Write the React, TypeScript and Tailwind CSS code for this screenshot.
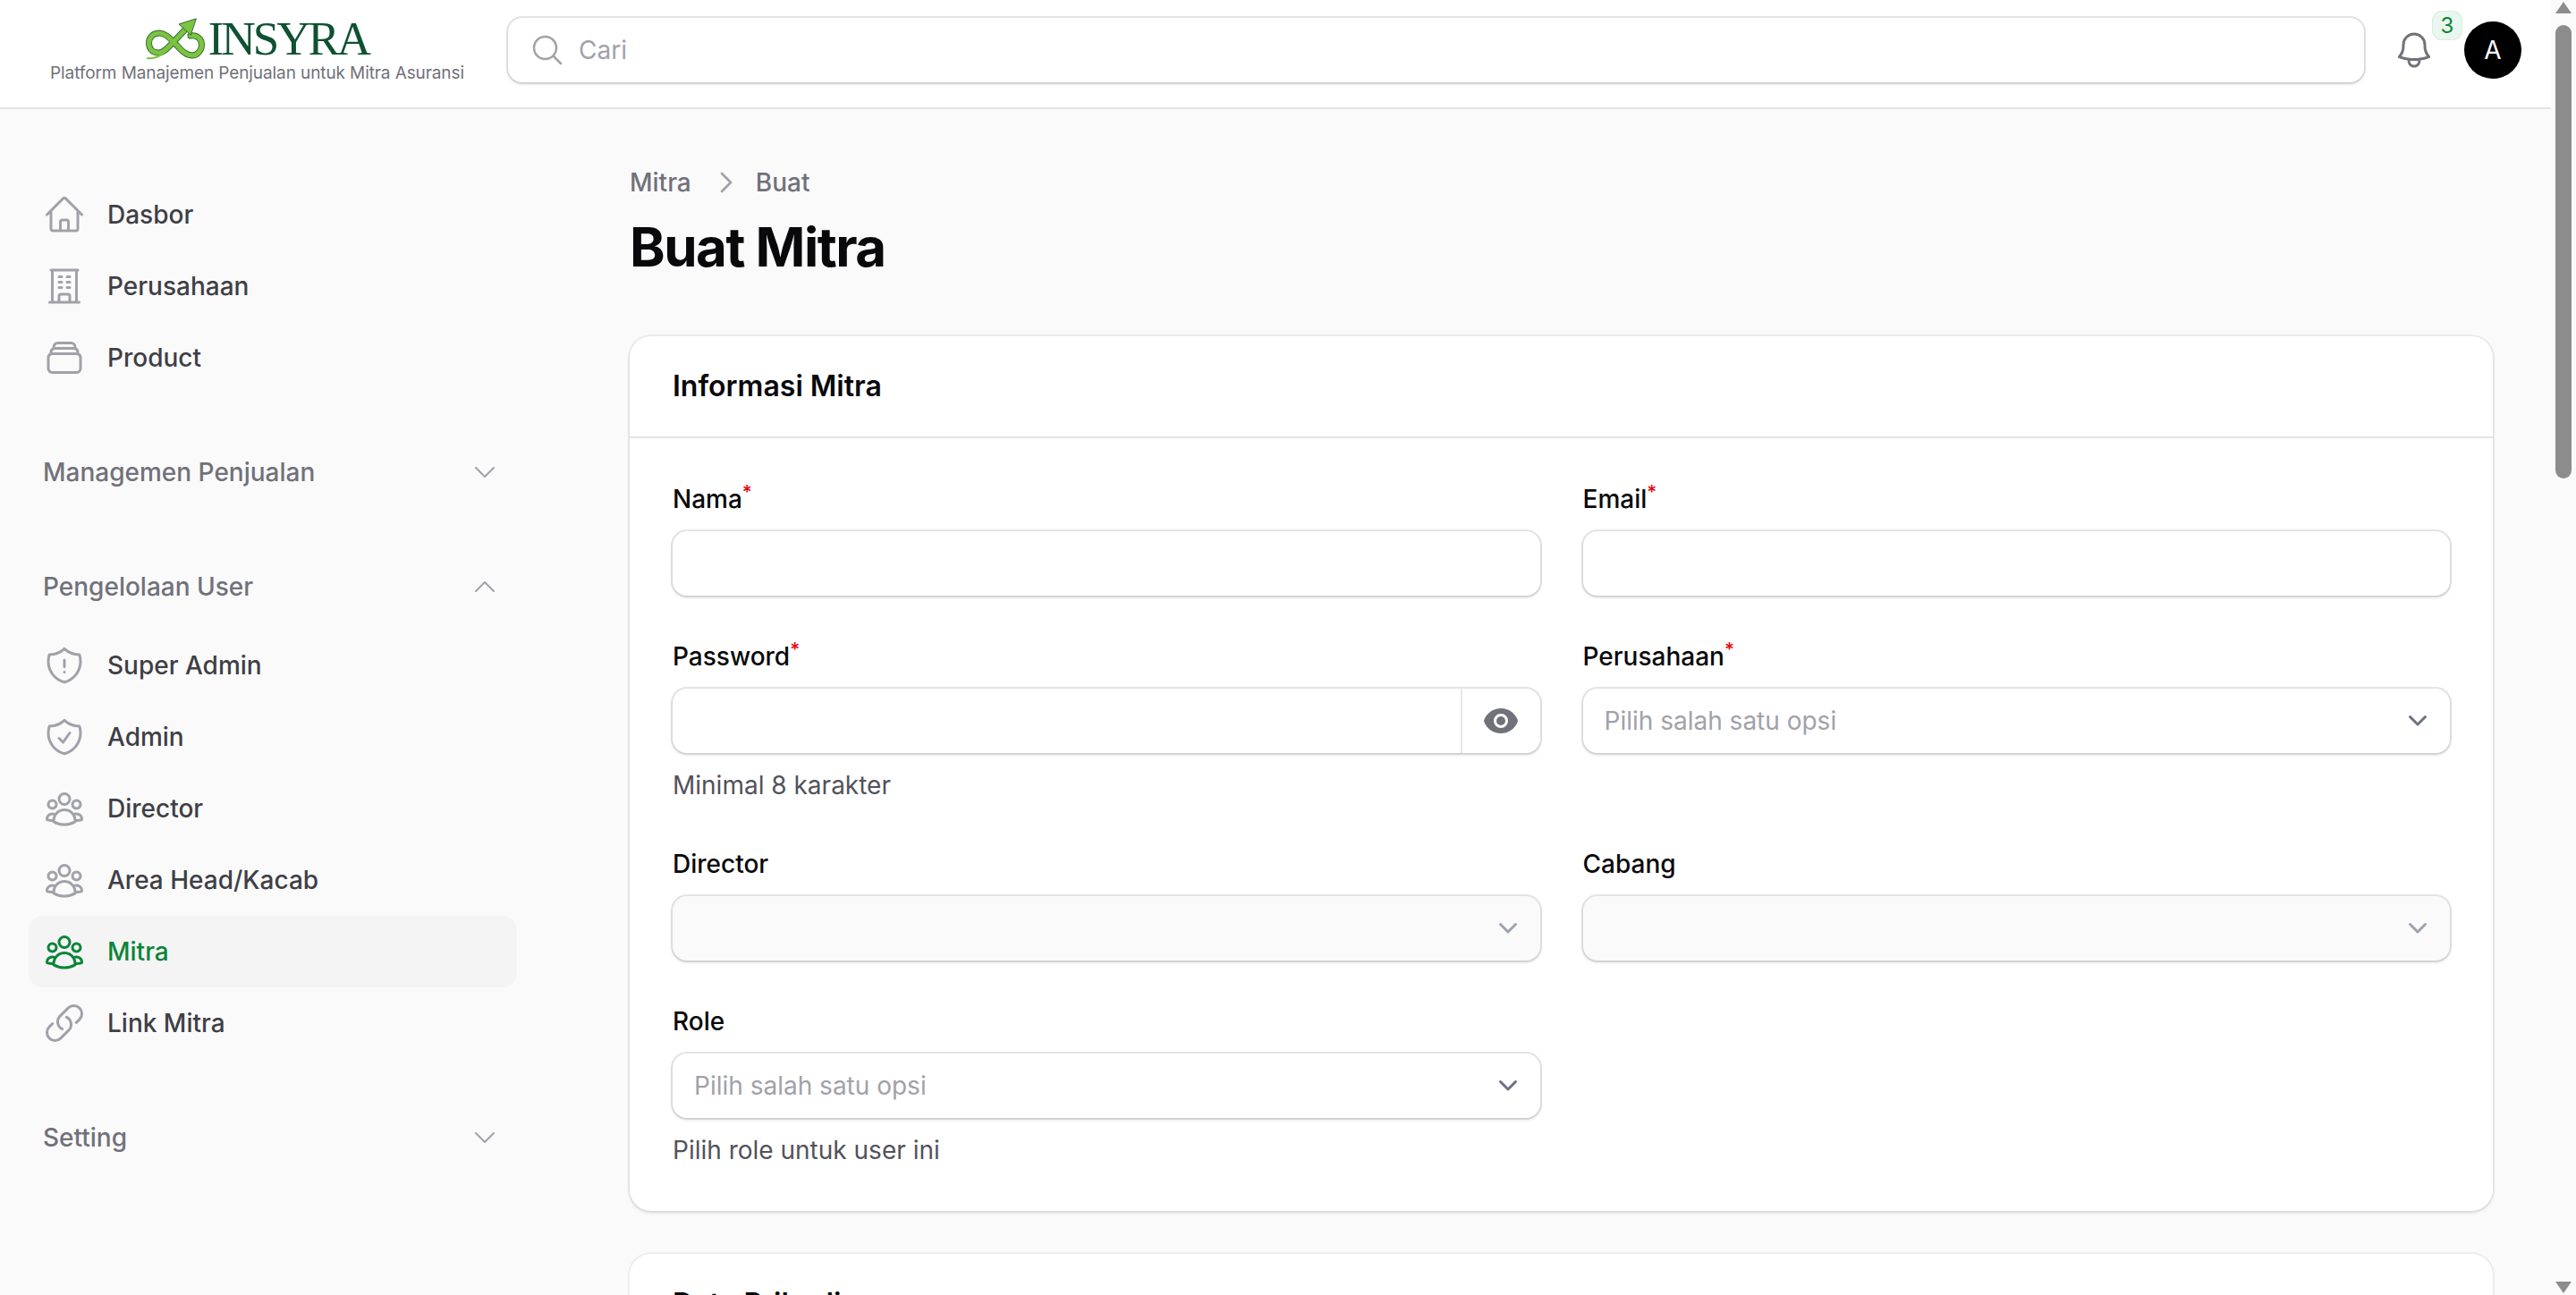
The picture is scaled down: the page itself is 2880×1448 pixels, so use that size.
import type { ReactNode } from "react";

const fontClass = "font-['Inter','Liberation_Sans',sans-serif]";

const paths = {
  home: "m2.25 12 8.954-8.955c.44-.439 1.152-.439 1.591 0L21.75 12M4.5 9.75v10.125c0 .621.504 1.125 1.125 1.125H9.75v-4.875c0-.621.504-1.125 1.125-1.125h2.25c.621 0 1.125.504 1.125 1.125V21h4.125c.621 0 1.125-.504 1.125-1.125V9.75M8.25 21h8.25",
  building:
    "M3.75 21h16.5M4.5 3h15M5.25 3v18m13.5-18v18M9 6.75h1.5m-1.5 3h1.5m-1.5 3h1.5m3-6H15m-1.5 3H15m-1.5 3H15M9 21v-3.375c0-.621.504-1.125 1.125-1.125h3.75c.621 0 1.125.504 1.125 1.125V21",
  stack:
    "M6 6.878V6a2.25 2.25 0 0 1 2.25-2.25h7.5A2.25 2.25 0 0 1 18 6v.878m-12 0c.235-.083.487-.128.75-.128h10.5c.263 0 .515.045.75.128m-12 0A2.25 2.25 0 0 0 4.5 9v.878m13.5-3A2.25 2.25 0 0 1 19.5 9v.878m0 0a2.246 2.246 0 0 0-.75-.128H5.25c-.263 0-.515.045-.75.128m15 0A2.25 2.25 0 0 1 21 12v6a2.25 2.25 0 0 1-2.25 2.25H5.25A2.25 2.25 0 0 1 3 18v-6c0-.98.626-1.813 1.5-2.122",
  shieldAlert:
    "M12 9v3.75m0-10.036A11.959 11.959 0 0 1 3.598 6 11.99 11.99 0 0 0 3 9.75c0 5.592 3.824 10.29 9 11.622 5.176-1.332 9-6.03 9-11.622 0-1.31-.21-2.57-.598-3.75h-.152c-3.196 0-6.1-1.25-8.25-3.286Zm0 13.036h.008v.008H12v-.008Z",
  shieldCheck:
    "M9 12.75 11.25 15 15 9.75m-3-7.036A11.959 11.959 0 0 1 3.598 6 11.99 11.99 0 0 0 3 9.749c0 5.592 3.824 10.29 9 11.623 5.176-1.332 9-6.03 9-11.622 0-1.31-.21-2.571-.598-3.751h-.152c-3.196 0-6.1-1.248-8.25-3.285Z",
  group:
    "M18 18.72a9.094 9.094 0 0 0 3.741-.479 3 3 0 0 0-4.682-2.72m.94 3.198.001.031c0 .225-.012.447-.037.666A11.944 11.944 0 0 1 12 21c-2.17 0-4.207-.576-5.963-1.584A6.062 6.062 0 0 1 6 18.719m12 0a5.971 5.971 0 0 0-.941-3.197m0 0A5.995 5.995 0 0 0 12 12.75a5.995 5.995 0 0 0-5.058 2.772m0 0a3 3 0 0 0-4.681 2.72 8.986 8.986 0 0 0 3.74.477m.94-3.197a5.971 5.971 0 0 0-.94 3.197M15 6.75a3 3 0 1 1-6 0 3 3 0 0 1 6 0Zm6 3a2.25 2.25 0 1 1-4.5 0 2.25 2.25 0 0 1 4.5 0Zm-13.5 0a2.25 2.25 0 1 1-4.5 0 2.25 2.25 0 0 1 4.5 0Z",
  link: "M13.19 8.688a4.5 4.5 0 0 1 1.242 7.244l-4.5 4.5a4.5 4.5 0 0 1-6.364-6.364l1.757-1.757m13.35-.622 1.757-1.757a4.5 4.5 0 0 0-6.364-6.364l-4.5 4.5a4.5 4.5 0 0 0 1.242 7.244",
  bell: "M14.857 17.082a23.848 23.848 0 0 0 5.454-1.31A8.967 8.967 0 0 1 18 9.75V9A6 6 0 0 0 6 9v.75a8.967 8.967 0 0 1-2.312 6.022c1.733.64 3.56 1.085 5.455 1.31m5.714 0a24.255 24.255 0 0 1-5.714 0m5.714 0a3 3 0 1 1-5.714 0",
  search: "m21 21-5.197-5.197m0 0A7.5 7.5 0 1 0 5.196 5.196a7.5 7.5 0 0 0 10.607 10.607Z",
  chevronDown: "m19.5 8.25-7.5 7.5-7.5-7.5",
  chevronUp: "m4.5 15.75 7.5-7.5 7.5 7.5",
  chevronRight: "m8.25 4.5 7.5 7.5-7.5 7.5",
  selectChevron: "M3.5 7.5 12 16l8.5-8.5",
};

const Icon = ({ d, className }: { d: string; className: string }) => (
  <svg viewBox="0 0 24 24" fill="none" stroke="currentColor" strokeWidth={1.5} strokeLinecap="round" strokeLinejoin="round" className={className}>
    <path d={d} />
  </svg>
);

const ribbon =
  "M46 11 L28 30 C24 34 20 39 14 39 C7 39 3.5 34 3.5 28 C3.5 21 9 17 15 17 C22 17 27 23 33 29 C39 35 44 42 52 42 C58 42 62.5 36 62.5 30 C62.5 24 58 19 50 20";

const Logo = () => (
  <svg viewBox="0 0 66 47" className="w-[66px] h-[47px] shrink-0" fill="none" strokeLinecap="round" strokeLinejoin="round">
    {/* dark edge first, lime on top */}
    <path d={ribbon} stroke="#2f6b2a" strokeWidth={7} />
    <path d={ribbon} stroke="#7cc243" strokeWidth={5.2} />
    <path d="M2 45 C8 46 14 44 20 39" stroke="#7cc243" strokeWidth={2.2} />
    <path d="M56 1 L37 7 L50 19 Z" fill="#7cc243" stroke="#2f6b2a" strokeWidth={1} />
  </svg>
);

const NavItem = ({ icon, label, active }: { icon: string; label: string; active?: boolean }) => (
  <a className={`flex items-center gap-6 h-20 px-4 rounded-2xl ${active ? "bg-[#f4f4f5]" : ""}`}>
    <Icon d={icon} className={`w-12 h-12 shrink-0 ${active ? "text-[#0a8537]" : "text-[#a1a1aa]"}`} />
    <span className={`text-[28px] leading-10 font-medium ${active ? "text-[#0a8537]" : "text-[#3f3f46]"}`}>{label}</span>
  </a>
);

const GroupHeader = ({ label, open }: { label: string; open?: boolean }) => (
  <div className="flex items-center justify-between h-20 pl-4 pr-5">
    <span className="text-[28px] leading-10 font-medium text-[#71717a]">{label}</span>
    <Icon d={open ? paths.chevronUp : paths.chevronDown} className="w-8 h-8 text-[#a1a1aa]" />
  </div>
);

const Sidebar = () => (
  <aside className="w-[640px] shrink-0 pt-20 pl-8 pr-[62px]">
    <NavItem icon={paths.home} label="Dasbor" />
    <NavItem icon={paths.building} label="Perusahaan" />
    <NavItem icon={paths.stack} label="Product" />
    <div className="mt-12">
      <GroupHeader label="Managemen Penjualan" />
    </div>
    <div className="mt-12">
      <GroupHeader label="Pengelolaan User" open />
      <div className="mt-2">
        <NavItem icon={paths.shieldAlert} label="Super Admin" />
        <NavItem icon={paths.shieldCheck} label="Admin" />
        <NavItem icon={paths.group} label="Director" />
        <NavItem icon={paths.group} label="Area Head/Kacab" />
        <NavItem icon={paths.group} label="Mitra" active />
        <NavItem icon={paths.link} label="Link Mitra" />
      </div>
    </div>
    <div className="mt-12">
      <GroupHeader label="Setting" />
    </div>
  </aside>
);

const Field = ({ label, required, hint, children }: { label: string; required?: boolean; hint?: string; children: ReactNode }) => (
  <div className="flex flex-col gap-4">
    <label className="text-[28px] leading-10 font-medium text-[#09090b]">
      {label}
      {required && <sup className="text-[#e7000b] font-medium">*</sup>}
    </label>
    {children}
    {hint && <p className="text-[28px] leading-10 text-[#52525b]">{hint}</p>}
  </div>
);

const boxClass = "h-[72px] rounded-2xl shadow-[0_0_0_2px_rgba(9,9,11,0.1),0_2px_4px_rgba(0,0,0,0.12)]";

const Select = ({ placeholder, disabled }: { placeholder?: string; disabled?: boolean }) => (
  <div className={`${boxClass} flex items-center justify-between pl-6 pr-6 ${disabled ? "bg-[#fafafa]" : "bg-white"}`}>
    <span className="text-[28px] leading-10 text-[#a1a1aa]">{placeholder}</span>
    <Icon d={paths.selectChevron} className={`w-6 h-6 stroke-3 ${disabled ? "text-[#9ca3af]" : "text-[#6b7280]"}`} />
  </div>
);

export default function App() {
  return (
    <div className={`${fontClass} flex h-[1448px] overflow-hidden bg-[#fafafa]`}>
      <div className="flex-1 min-w-0 flex flex-col">
        <header className="h-[120px] shrink-0 flex items-center bg-white pb-2 pr-[33px] shadow-[0_2px_0_0_#e5e5e5] z-10">
          <div className="w-[568px] shrink-0 pl-[56px] pt-[2px]">
            <div className="w-[463px] flex flex-col items-center">
              <div className="flex items-center h-[47px]">
                <Logo />
                <span className="ml-1 text-[53px] leading-[47px] tracking-[-3px] font-['Liberation_Serif',serif] text-[#0f5132]">INSYRA</span>
              </div>
              <span className="mt-[3px] text-[19px] leading-6 tracking-[-0.1px] text-[#71717a] whitespace-nowrap">Platform Manajemen Penjualan untuk Mitra Asuransi</span>
            </div>
          </div>
          <div className={`${boxClass} flex-1 flex items-center gap-[15px] pl-6 bg-white`}>
            <Icon d={paths.search} className="w-10 h-10 text-[#a1a1aa]" />
            <span className="text-[28px] leading-10 text-[#a1a1aa]">Cari</span>
          </div>
          <div className="relative ml-8">
            <Icon d={paths.bell} className="w-12 h-12 text-[#71717a]" />
            <span className="absolute left-[45px] -top-[19px] w-8 h-[31px] flex items-center justify-center rounded-[10px] bg-[#eaf7ef] shadow-[0_0_0_1px_#d5efdf] text-[24px] leading-none text-[#0a8537]">
              3
            </span>
          </div>
          <div className="ml-8 w-16 h-16 rounded-full bg-black flex items-center justify-center text-white text-[28px]">A</div>
        </header>

        <div className="flex-1 flex min-h-0">
          <Sidebar />
          <main className="flex-1 min-w-0 pl-16 pr-[65px] pt-16">
            <nav className="flex items-center gap-5 text-[28px] leading-10 font-medium text-[#71717a]">
              <span>Mitra</span>
              <Icon d={paths.chevronRight} className="w-8 h-8 ml-[3px] -mr-[3px] stroke-2 text-[#a1a1aa]" />
              <span>Buat</span>
            </nav>
            <h1 className="mt-4 text-[60px] leading-[72px] font-bold tracking-[-1.5px] text-[#09090b]">Buat Mitra</h1>

            <section className="mt-16 rounded-3xl bg-white shadow-[0_0_0_2px_rgba(9,9,11,0.05),0_2px_4px_rgba(0,0,0,0.1)]">
              <div className="h-[114px] px-12 flex items-center border-b-2 border-[#e5e5e5]">
                <h2 className="text-[32px] leading-12 font-semibold text-[#09090b]">Informasi Mitra</h2>
              </div>
              <div className="p-12 grid grid-cols-2 gap-x-12 gap-y-12 items-start">
                <Field label="Nama" required>
                  <div className={`${boxClass} bg-white`} />
                </Field>
                <Field label="Email" required>
                  <div className={`${boxClass} bg-white`} />
                </Field>
                <Field label="Password" required hint="Minimal 8 karakter">
                  <div className={`${boxClass} bg-white flex justify-end`}>
                    <div className="w-[89px] border-l-2 border-[#e9e9ea] flex items-center justify-center">
                      <svg viewBox="0 0 20 20" fill="currentColor" className="w-10 h-10 text-[#71717a]">
                        <path d="M10 12.5a2.5 2.5 0 1 0 0-5 2.5 2.5 0 0 0 0 5Z" />
                        <path
                          fillRule="evenodd"
                          clipRule="evenodd"
                          d="M.664 10.59a1.651 1.651 0 0 1 0-1.186A10.004 10.004 0 0 1 10 3c4.257 0 7.893 2.66 9.336 6.41.147.381.146.804 0 1.186A10.004 10.004 0 0 1 10 17c-4.257 0-7.893-2.66-9.336-6.41ZM14 10a4 4 0 1 1-8 0 4 4 0 0 1 8 0Z"
                        />
                      </svg>
                    </div>
                  </div>
                </Field>
                <Field label="Perusahaan" required>
                  <Select placeholder="Pilih salah satu opsi" />
                </Field>
                <Field label="Director">
                  <Select disabled />
                </Field>
                <Field label="Cabang">
                  <Select disabled />
                </Field>
                <Field label="Role" hint="Pilih role untuk user ini">
                  <Select placeholder="Pilih salah satu opsi" />
                </Field>
              </div>
            </section>

            <section className="mt-12 rounded-3xl bg-white shadow-[0_0_0_2px_rgba(9,9,11,0.05)] h-[200px] px-12 pt-8">
              <h2 className="text-[32px] leading-12 font-semibold text-[#09090b]">Data Pribadi</h2>
            </section>
          </main>
        </div>
      </div>

      {/* page scrollbar */}
      <div className="w-7 shrink-0 bg-[#fafafa] flex flex-col items-center justify-between py-[2px] z-20">
        <div className="flex flex-col items-center">
          <svg viewBox="0 0 18 13" className="w-[18px] h-[13px] text-[#8c8c8c]" fill="currentColor">
            <path d="M9 0 18 13H0Z" />
          </svg>
          <div className="mt-[13px] w-[18px] h-[507px] rounded-full bg-[#8c8c8c]" />
        </div>
        <svg viewBox="0 0 18 13" className="w-[18px] h-[13px] text-[#8c8c8c]" fill="currentColor">
          <path d="M0 0H18L9 13Z" />
        </svg>
      </div>
    </div>
  );
}
